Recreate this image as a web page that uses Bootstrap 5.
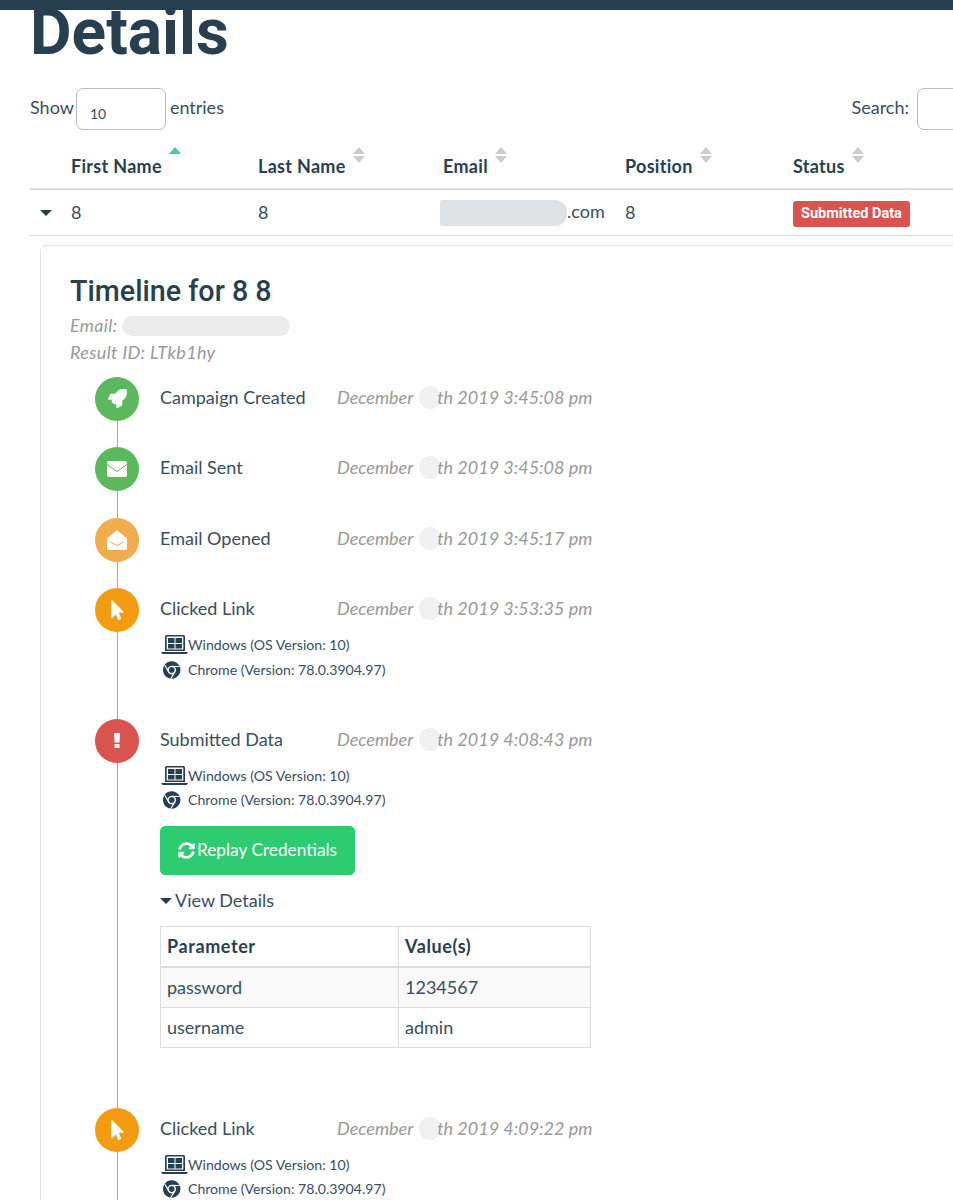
<!DOCTYPE html>
<html lang="en">
<head>
<meta charset="utf-8">
<title>Details</title>
<link href="https://cdn.jsdelivr.net/npm/bootstrap@5.3.0/dist/css/bootstrap.min.css" rel="stylesheet">
<style>
html,body{height:1200px;overflow:hidden;}
body{font-family:"Lato","Noto Sans",sans-serif;font-size:18px;color:#3b4d5e;background:#fff;}
.topbar{height:10px;min-height:10px;padding:0;background:#283f50;}
.page{padding-left:30px;width:1060px;}
.page-title{font-family:Roboto,sans-serif;font-weight:700;font-size:64px;line-height:70px;color:#283f50;margin:-2px 0 20px;height:70px;}
.dt-bar{height:42px;margin-bottom:14px;width:923px;line-height:38px;}
.dt-select{width:90px;height:42px;border:1px solid #bbb;border-radius:7px;font-size:14px;padding:12px 13px 4px;color:#3b4d5e;margin:0 4px 0 2px;background:#fff;}
.dt-search{width:120px;height:42px;border:1px solid #bbb;border-radius:7px;margin-left:8px;background:#fff;}
.search-wrap{margin-right:-84px;}
.res-table{table-layout:fixed;width:1060px;margin:0;color:#3b4d5e;}
.res-table th,.res-table td{border-color:#ddd;padding:0 8px;background:transparent;box-shadow:none;color:inherit;}
.res-table thead th{height:45px;border-bottom:2px solid #ddd;font-weight:700;color:#283f50;vertical-align:bottom;padding-bottom:10px;line-height:24px;letter-spacing:.3px;}
.res-table tbody td{height:46px;border-bottom:1px solid #ddd;vertical-align:middle;}
.sorter{display:inline-block;vertical-align:top;margin:-7px 0 0 7px;width:12px;}
.sorter i{display:block;width:0;height:0;border-left:6px solid transparent;border-right:6px solid transparent;}
.sorter .up{border-bottom:7px solid #ccc;margin-bottom:2px;}
.sorter .down{border-top:7px solid #ccc;}
.sorter .on{border-bottom-color:#46c8a9;}
.caret-ic{display:inline-block;width:0;height:0;border-left:6px solid transparent;border-right:6px solid transparent;border-top:6px solid #283f50;}
.row-caret{margin:0 0 3px 2px;}
.status-tag{display:inline-block;font-family:Roboto,sans-serif;font-weight:700;font-size:14.5px;line-height:26px;height:26px;padding:0 8px;background:#d9534f;color:#fff;border-radius:3px;}
.smudge-mail{display:inline-block;width:127px;height:26px;vertical-align:middle;background:#dfe2e4;border-radius:2px 12px 12px 2px;margin-left:-3px;}
.detail-card{margin:9px 0 0 10px;border:1px solid #e5e5e5;border-radius:6px;padding:23px 29px 0;height:1000px;background:#fff;}
.tl-title{font-family:Roboto,sans-serif;font-weight:500;font-size:28.7px;line-height:44px;color:#283f50;margin:0 0 -1px;}
.tl-sub{font-style:italic;color:#999;line-height:27px;letter-spacing:.35px;}
.smudge-line{display:inline-block;width:168px;height:20px;vertical-align:-4px;background:#ececec;border-radius:10px;}
.tl-list{position:relative;margin:11px 0 0 25px;}
.tl-list::before{content:"";position:absolute;left:22px;top:0;bottom:-200px;width:1px;background:#aaa;}
.tl-item{display:flex;gap:21px;min-height:70.5px;}
.tl-dot{position:relative;z-index:1;flex:none;width:44px;height:44px;border-radius:50%;display:flex;align-items:center;justify-content:center;}
.tl-dot svg{fill:#fff;display:block;}
.dot-green{background:#5cb85c;}
.dot-soft{background:#f0ad4e;}
.dot-orange{background:#f39c12;}
.dot-red{background:#d9534f;}
.tl-main{flex:1;}
.tl-head{display:flex;line-height:40px;}
.tl-name{width:177px;}
.tl-date{font-style:italic;color:#999;white-space:nowrap;}
.smudge-dot{display:inline-block;width:22px;height:23px;border-radius:50%;background:#f1f1f1;vertical-align:-5px;margin:0 -4px 0 2px;}
.tl-meta{font-size:14.1px;line-height:24.5px;display:flex;align-items:center;}
.tl-meta svg{flex:none;display:block;fill:#283f50;}
.ic-box{width:28px;flex:none;display:flex;justify-content:center;}
.ic-chrome{padding-right:4px;}
.tl-first-meta{margin-top:5px;}
.tl-clicked{min-height:130.5px;}
.replay-btn{display:inline-flex;align-items:center;gap:2px;width:195px;height:49px;justify-content:center;background:#2ecc71;border-color:#2ecc71;color:#fff;font-size:17.3px;padding:0;border-radius:5px;margin-top:13px;}
.replay-btn svg{fill:#fff;}
.view-link{line-height:24px;margin:13px 0 14px;color:#3b4d5e;}
.view-link .caret-ic{vertical-align:3px;margin-right:3px;}
.param-table{width:431px;table-layout:fixed;margin:0 0 60px;color:#3b4d5e;border-color:#ddd;}
.param-table th,.param-table td{padding:0 6px;height:40px;vertical-align:middle;border:1px solid #ddd;background:transparent;box-shadow:none;color:inherit;}
.param-table th{font-weight:700;color:#283f50;height:41px;border-bottom-width:2px;letter-spacing:.6px;}
.param-table tbody tr:first-child td{background:#f9f9f9;}
</style>
</head>
<body>
<svg width="0" height="0" class="position-absolute">
  <defs>
    <symbol id="ic-win" viewBox="0 0 27 20"><path fill-rule="evenodd" d="M5.500 0h17a1.500 1.500 0 0 1 1.500 1.500V16H4V1.500A1.500 1.500 0 0 1 5.500 0zm.2 1.500V14.500h16.600V1.500z"/><path d="M7 3h6.500v5H7zM14.500 3H21v5h-6.500zM7 9h6.500v4.500H7zM14.500 9H21v4.500h-6.500z"/><path d="M0 17h27l-1.500 2h-24z"/></symbol>
    <symbol id="ic-chrome" viewBox="0 0 512 512"><path d="M131.5 217.500L55.100 100.100c47.600-59.200 119-91.800 192-92.100 42.300-.3 85.500 10.500 124.800 33.200 43.400 25.200 76.400 61.400 97.400 103L264 133.400c-58.100-3.400-113.400 29.300-132.500 84.100zm32.900 38.500c0 46.200 37.400 83.600 83.600 83.600s83.600-37.400 83.600-83.600-37.400-83.600-83.600-83.600-83.600 37.300-83.600 83.600zm314.900-89.200L339.600 174c37.900 44.300 38.500 108.200 6.600 157.200L234.100 503.600c46.500 2.500 94.400-7.700 137.800-32.900 107.400-62 150.900-192 107.400-303.900zM133.700 303.600L40.400 120.100C14.900 159.100 0 205.900 0 256c0 124 90.800 226.700 209.500 244.900l63.700-124.800c-57.600 10.800-113.200-20.800-139.500-72.500z"/></symbol>
    <symbol id="ic-pointer" viewBox="0 0 320 512"><path d="M302.189 329.126H196.105l55.831 135.993c3.889 9.428-.555 19.999-9.444 23.999l-49.165 21.427c-9.165 4-19.443-.571-23.332-9.714l-53.053-129.136-86.664 89.138C18.729 472.71 0 463.554 0 447.977V18.299C0 1.899 19.921-6.096 30.277 5.443l284.412 292.542c11.472 11.179 3.007 31.141-12.5 31.141z"/></symbol>
  </defs>
</svg>
<nav class="navbar fixed-top topbar"></nav>
<main class="page">
  <h1 class="page-title">Details</h1>
  <div class="d-flex justify-content-between align-items-start dt-bar">
    <div class="d-flex align-items-start">Show <select class="form-control dt-select"><option>10</option></select> entries</div>
    <div class="d-flex align-items-start search-wrap">Search: <div class="dt-search"></div></div>
  </div>
  <table class="table res-table">
    <colgroup><col style="width:33px"><col style="width:187px"><col style="width:185px"><col style="width:182px"><col style="width:168px"><col></colgroup>
    <thead><tr>
      <th></th>
      <th>First Name<span class="sorter"><i class="up on"></i></span></th>
      <th>Last Name<span class="sorter"><i class="up"></i><i class="down"></i></span></th>
      <th>Email<span class="sorter"><i class="up"></i><i class="down"></i></span></th>
      <th>Position<span class="sorter"><i class="up"></i><i class="down"></i></span></th>
      <th>Status<span class="sorter"><i class="up"></i><i class="down"></i></span></th>
    </tr></thead>
    <tbody><tr>
      <td><span class="caret-ic row-caret"></span></td>
      <td>8</td><td>8</td>
      <td><span class="smudge-mail"></span>.com</td>
      <td>8</td>
      <td><span class="status-tag">Submitted Data</span></td>
    </tr></tbody>
  </table>
  <section class="detail-card">
    <h2 class="tl-title">Timeline for 8 8</h2>
    <div class="tl-sub">Email: <span class="smudge-line"></span></div>
    <div class="tl-sub">Result ID: LTkb1hy</div>
    <div class="tl-list">
      <div class="tl-item">
        <div class="tl-dot dot-green"><svg width="19" height="19" viewBox="0 0 512 512"><path d="M505.12019,19.09375c-1.18945-5.53125-6.65819-11-12.207-12.1875C460.716,0,435.507,0,410.40747,0,307.17523,0,245.26909,55.20312,199.05238,128H94.83772c-16.34763.01562-35.55658,11.875-42.88664,26.48438L2.51562,253.29688A28.4,28.4,0,0,0,0,264a24.00867,24.00867,0,0,0,24.00582,24H127.81618l-22.47457,22.46875c-11.36521,11.36133-12.99607,32.25781,0,45.25L156.24582,406.625c11.15623,11.1875,32.15619,13.15625,45.27726,0l22.47457-22.46875V488a24.00867,24.00867,0,0,0,24.00581,24,28.55934,28.55934,0,0,0,10.707-2.51562l98.72834-49.39063c14.62888-7.29687,26.50776-26.5,26.50776-42.85937V312.79688c72.59753-46.3125,128.03493-108.40626,128.03493-211.09376C512.07526,76.5,512.07526,51.29688,505.12019,19.09375Z"/></svg></div>
        <div class="tl-main"><div class="tl-head"><span class="tl-name">Campaign Created</span><span class="tl-date">December <span class="smudge-dot"></span>th 2019 3:45:08 pm</span></div></div>
      </div>
      <div class="tl-item">
        <div class="tl-dot dot-green"><svg width="20" height="16" viewBox="0 0 20 16"><rect width="20" height="16" rx="2"/><path d="M0 3.500L10 10.500L20 3.500" fill="none" stroke="#5cb85c" stroke-width="1"/></svg></div>
        <div class="tl-main"><div class="tl-head"><span class="tl-name">Email Sent</span><span class="tl-date">December <span class="smudge-dot"></span>th 2019 3:45:08 pm</span></div></div>
      </div>
      <div class="tl-item">
        <div class="tl-dot dot-soft"><svg width="20" height="20" viewBox="0 0 20 20"><path d="M10 0L20 8.500V18a2 2 0 0 1-2 2H2a2 2 0 0 1-2-2V8.500z"/><path d="M3.500 12L10 15.500L16.500 12" fill="none" stroke="#f0ad4e" stroke-width="1"/></svg></div>
        <div class="tl-main"><div class="tl-head"><span class="tl-name">Email Opened</span><span class="tl-date">December <span class="smudge-dot"></span>th 2019 3:45:17 pm</span></div></div>
      </div>
      <div class="tl-item tl-clicked">
        <div class="tl-dot dot-orange"><svg width="13" height="20"><use href="#ic-pointer"/></svg></div>
        <div class="tl-main">
          <div class="tl-head"><span class="tl-name">Clicked Link</span><span class="tl-date">December <span class="smudge-dot"></span>th 2019 3:53:35 pm</span></div>
          <div class="tl-meta tl-first-meta"><span class="ic-box"><svg width="27" height="20"><use href="#ic-win"/></svg></span>Windows (OS Version: 10)</div>
          <div class="tl-meta"><span class="ic-box ic-chrome"><svg width="18" height="18"><use href="#ic-chrome"/></svg></span>Chrome (Version: 78.0.3904.97)</div>
        </div>
      </div>
      <div class="tl-item">
        <div class="tl-dot dot-red"><svg width="6" height="15" viewBox="0 0 6 15"><path d="M0 0h6l-.5 9.500h-5zM.5 11h5v4h-5z"/></svg></div>
        <div class="tl-main">
          <div class="tl-head"><span class="tl-name">Submitted Data</span><span class="tl-date">December <span class="smudge-dot"></span>th 2019 4:08:43 pm</span></div>
          <div class="tl-meta tl-first-meta"><span class="ic-box"><svg width="27" height="20"><use href="#ic-win"/></svg></span>Windows (OS Version: 10)</div>
          <div class="tl-meta"><span class="ic-box ic-chrome"><svg width="18" height="18"><use href="#ic-chrome"/></svg></span>Chrome (Version: 78.0.3904.97)</div>
          <button type="button" class="btn replay-btn"><svg width="17" height="17" viewBox="0 0 512 512"><path d="M370.72 133.28C339.458 104.008 298.888 87.962 255.848 88c-77.458.068-144.328 53.178-162.791 126.85-1.344 5.363-6.122 9.15-11.651 9.15H24.103c-7.498 0-13.194-6.807-11.807-14.176C33.933 94.924 134.813 8 256 8c66.448 0 126.791 26.136 171.315 68.685L463.03 40.97C478.149 25.851 504 36.559 504 57.941V192c0 13.255-10.745 24-24 24H345.941c-21.382 0-32.090-25.851-16.971-40.971l41.750-41.749zM32 296h134.059c21.382 0 32.090 25.851 16.971 40.971l-41.750 41.750c31.262 29.273 71.835 45.319 114.876 45.280 77.418-.07 144.315-53.144 162.787-126.849 1.344-5.363 6.122-9.150 11.651-9.150h57.304c7.498 0 13.194 6.807 11.807 14.176C478.067 417.076 377.187 504 256 504c-66.448 0-126.791-26.136-171.315-68.685L48.970 471.030C33.851 486.149 8 475.441 8 454.059V320c0-13.255 10.745-24 24-24z"/></svg>Replay Credentials</button>
          <div class="view-link"><span class="caret-ic"></span>View Details</div>
          <table class="table param-table">
            <colgroup><col style="width:238px"><col></colgroup>
            <thead><tr><th>Parameter</th><th>Value(s)</th></tr></thead>
            <tbody><tr><td>password</td><td>1234567</td></tr><tr><td>username</td><td>admin</td></tr></tbody>
          </table>
        </div>
      </div>
      <div class="tl-item">
        <div class="tl-dot dot-orange"><svg width="13" height="20"><use href="#ic-pointer"/></svg></div>
        <div class="tl-main">
          <div class="tl-head"><span class="tl-name">Clicked Link</span><span class="tl-date">December <span class="smudge-dot"></span>th 2019 4:09:22 pm</span></div>
          <div class="tl-meta tl-first-meta"><span class="ic-box"><svg width="27" height="20"><use href="#ic-win"/></svg></span>Windows (OS Version: 10)</div>
          <div class="tl-meta"><span class="ic-box ic-chrome"><svg width="18" height="18"><use href="#ic-chrome"/></svg></span>Chrome (Version: 78.0.3904.97)</div>
        </div>
      </div>
    </div>
  </section>
</main>
<script src="https://cdn.jsdelivr.net/npm/bootstrap@5.3.0/dist/js/bootstrap.bundle.min.js"></script>
</body>
</html>
